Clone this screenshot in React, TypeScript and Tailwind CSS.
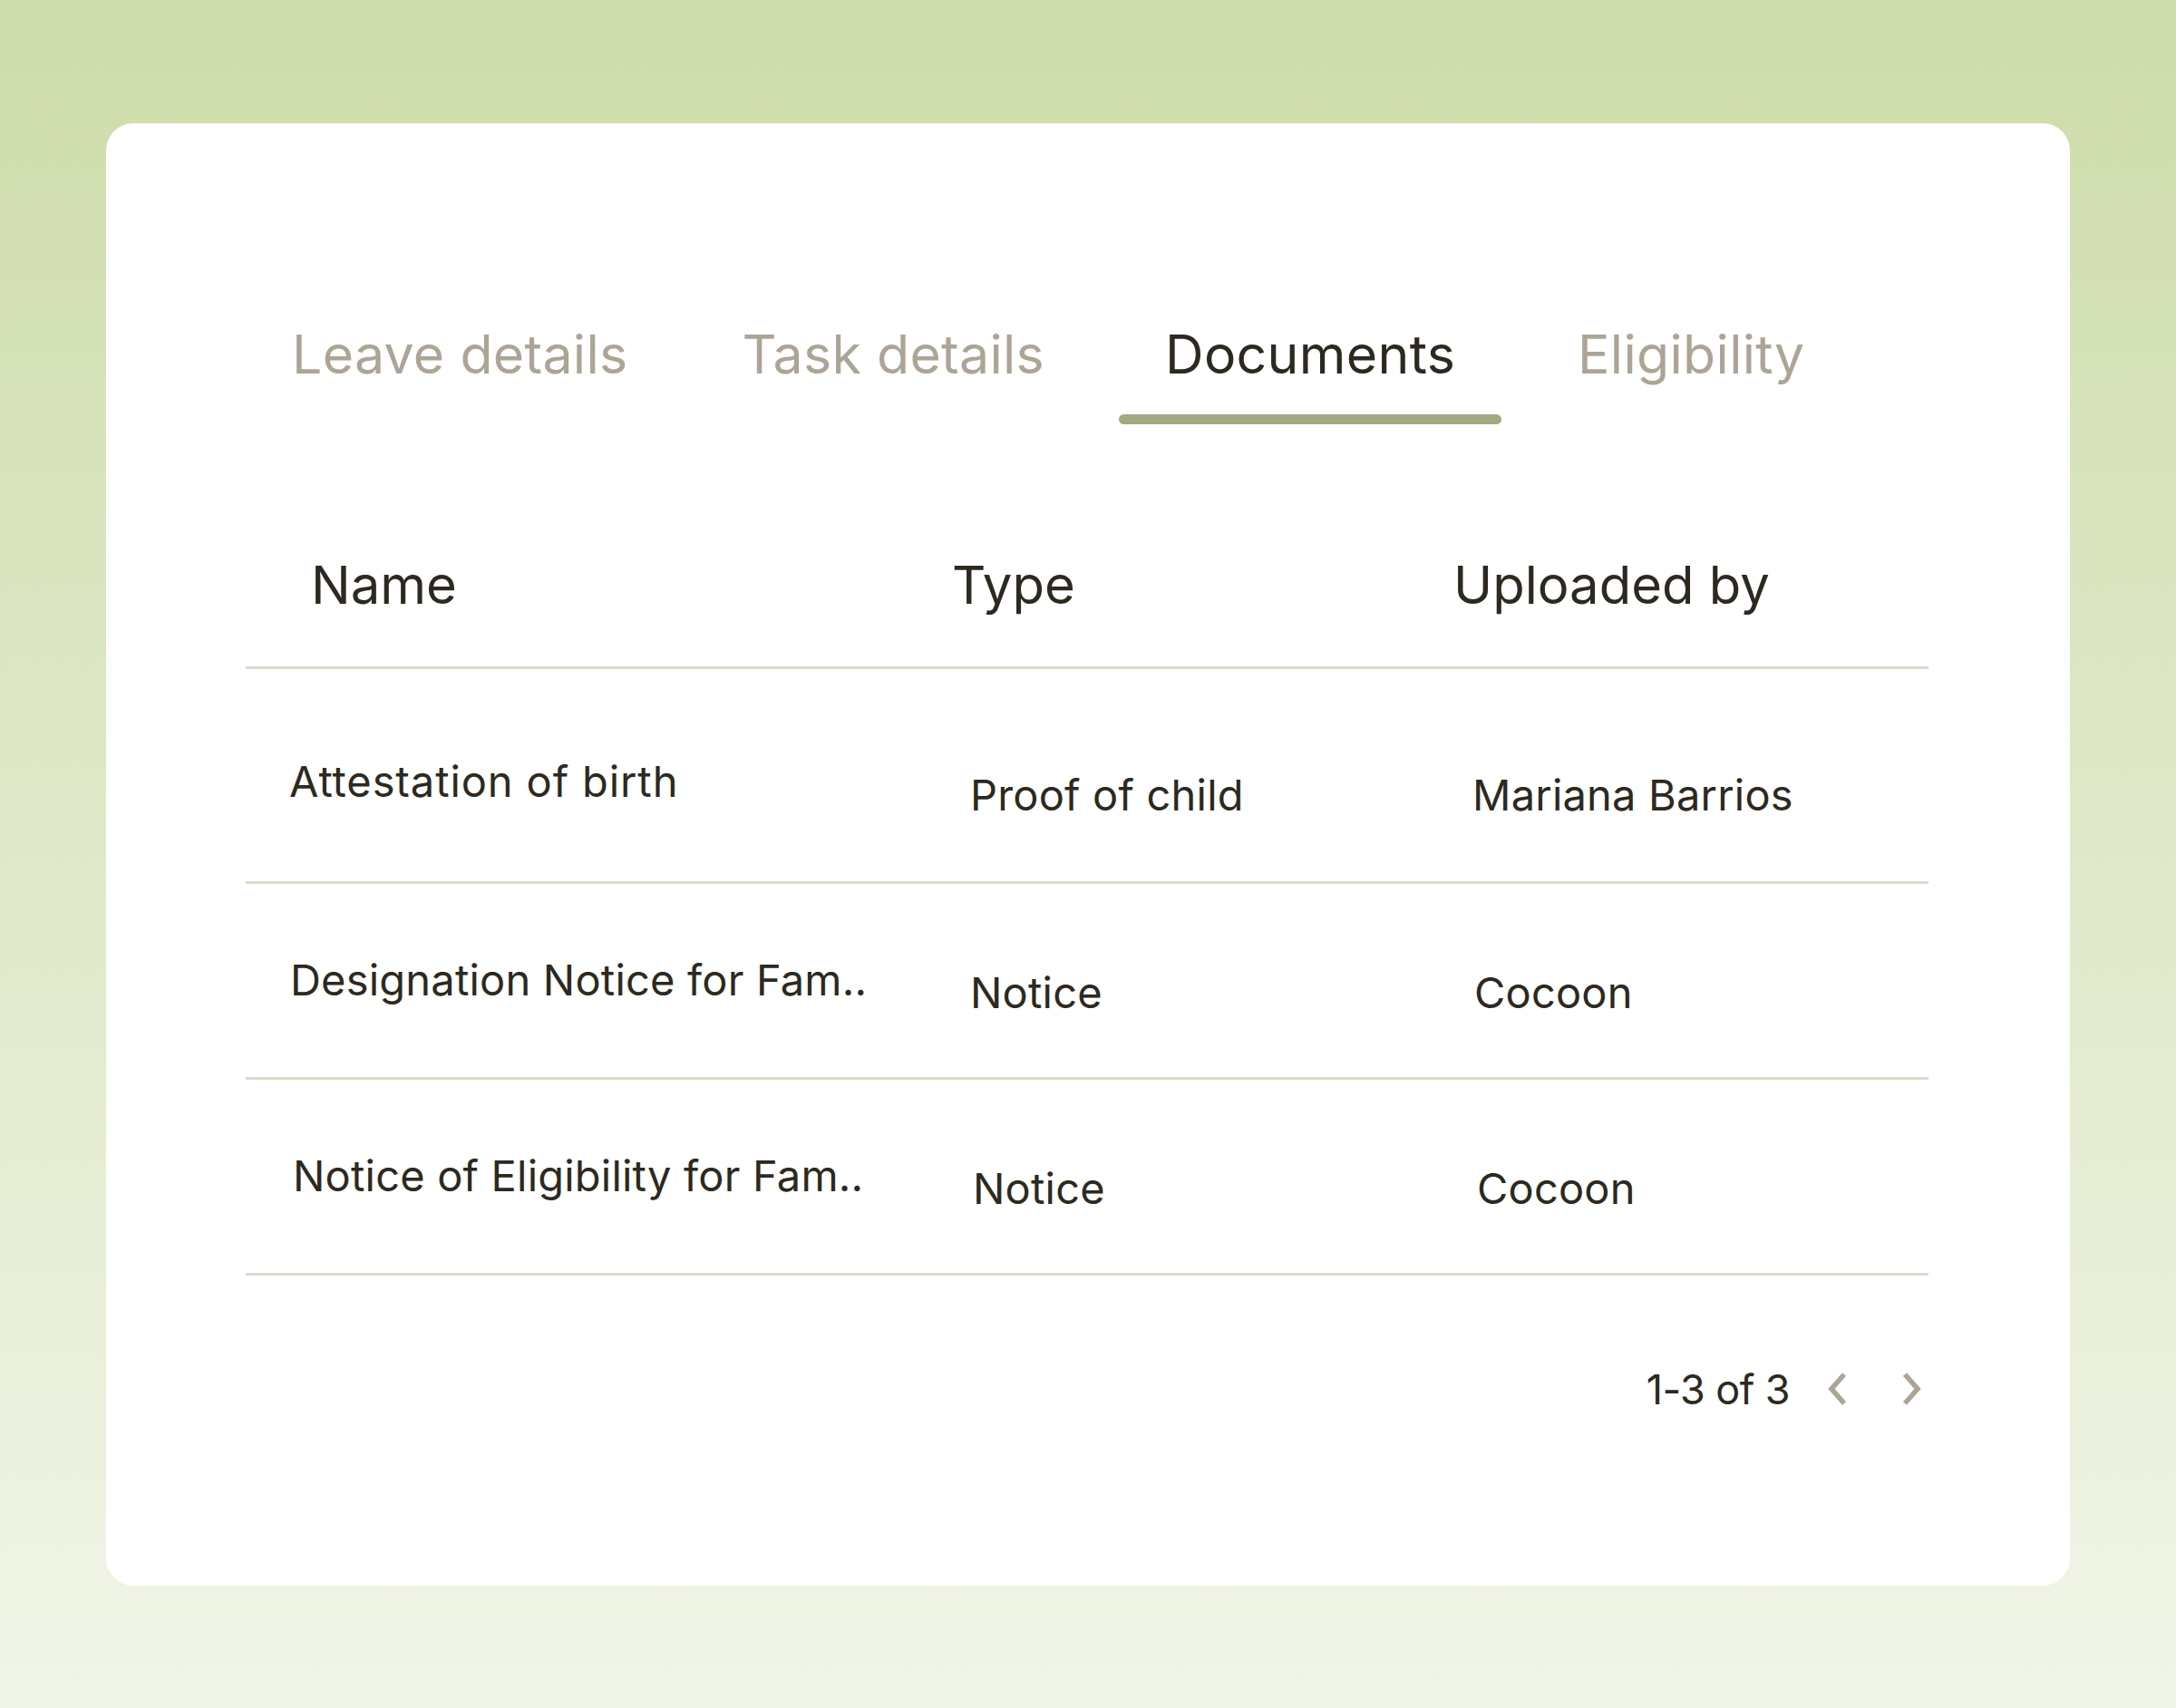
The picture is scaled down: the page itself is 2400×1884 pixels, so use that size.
import React from "react";

const tabs = [
  { label: "Leave details", ml: "ml-0" },
  { label: "Task details", ml: "ml-[24px]" },
  { label: "Documents", ml: "ml-[31px]" },
  { label: "Eligibility", ml: "ml-[33px]" },
];

const rows = [
  {
    name: "Attestation of birth",
    type: "Proof of child",
    by: "Mariana Barrios",
    namePad: "pt-[100px] pb-[87px] pl-[48px] tracking-[0.9px]",
    typePad: "pt-[115px] pl-[20px]",
    byPad: "pt-[115px] pl-[21px]",
  },
  {
    name: "Designation Notice for Fam..",
    type: "Notice",
    by: "Cocoon",
    namePad: "pt-[82px] pb-[84px] pl-[49px]",
    typePad: "pt-[96px] pl-[20px]",
    byPad: "pt-[96px] pl-[23px]",
  },
  {
    name: "Notice of Eligibility for Fam..",
    type: "Notice",
    by: "Cocoon",
    namePad: "pt-[82px] pb-[84px] pl-[52px]",
    typePad: "pt-[96px] pl-[23px]",
    byPad: "pt-[96px] pl-[26px]",
  },
];

function Chevron({ dir }: { dir: "left" | "right" }) {
  return (
    <svg width="24" height="40" viewBox="0 0 24 40" fill="none">
      <polyline
        points={dir === "left" ? "20,4 6,20 20,36" : "4,4 18,20 4,36"}
        stroke="#aca596"
        strokeWidth="5.5"
        strokeLinejoin="miter"
        strokeLinecap="butt"
      />
    </svg>
  );
}

export default function App() {
  return (
    <div
      className="w-[2400px] h-[1884px] flex items-center justify-center bg-gradient-to-b from-[#cedcaa] to-[#f1f5e8]"
      style={{ fontFamily: "Inter, 'Noto Sans', sans-serif" }}
    >
      <div className="w-[2166px] h-[1613px] bg-white rounded-[30px] pl-[154px] pr-[156px] pt-[225px] flex flex-col">
        {/* Tabs */}
        <div className="flex">
          {tabs.map((t) => {
            const active = t.label === "Documents";
            return (
              <div key={t.label} className={`flex flex-col ${t.ml}`}>
                <span
                  className={`px-[51px] text-[59px] leading-none tracking-[0.3px] whitespace-nowrap ${
                    active ? "text-[#2d2920]" : "text-[#aca596]"
                  }`}
                >
                  {t.label}
                </span>
                <div
                  className={`mt-[37px] h-[11px] rounded-full ${
                    active ? "bg-[#a4a883]" : "bg-transparent"
                  }`}
                />
              </div>
            );
          })}
        </div>

        {/* Table */}
        <div className="mt-[147px] text-[#2d2920]">
          <div className="grid grid-cols-[779px_553px_1fr] pb-[61px] border-b-[3px] border-[#dadbca] text-[58px] leading-none">
            <div className="pl-[72px] pt-[1px]">Name</div>
            <div className="pt-[1px]">Type</div>
            <div className="pt-[1px]">Uploaded by</div>
          </div>
          {rows.map((r) => (
            <div
              key={r.name}
              className="grid grid-cols-[779px_553px_1fr] items-start border-b-[3px] border-[#dadbca] text-[47px] leading-none tracking-[0.2px] whitespace-nowrap"
            >
              <div className={r.namePad}>{r.name}</div>
              <div className={r.typePad}>{r.type}</div>
              <div className={r.byPad}>{r.by}</div>
            </div>
          ))}
        </div>

        {/* Pagination */}
        <div className="mt-[103px] flex items-center justify-end pr-[6px] text-[#2d2920]">
          <span className="text-[45px] leading-none tracking-[-0.6px]">1-3 of 3</span>
          <div className="ml-[40px]">
            <Chevron dir="left" />
          </div>
          <div className="ml-[59px]">
            <Chevron dir="right" />
          </div>
        </div>
      </div>
    </div>
  );
}
